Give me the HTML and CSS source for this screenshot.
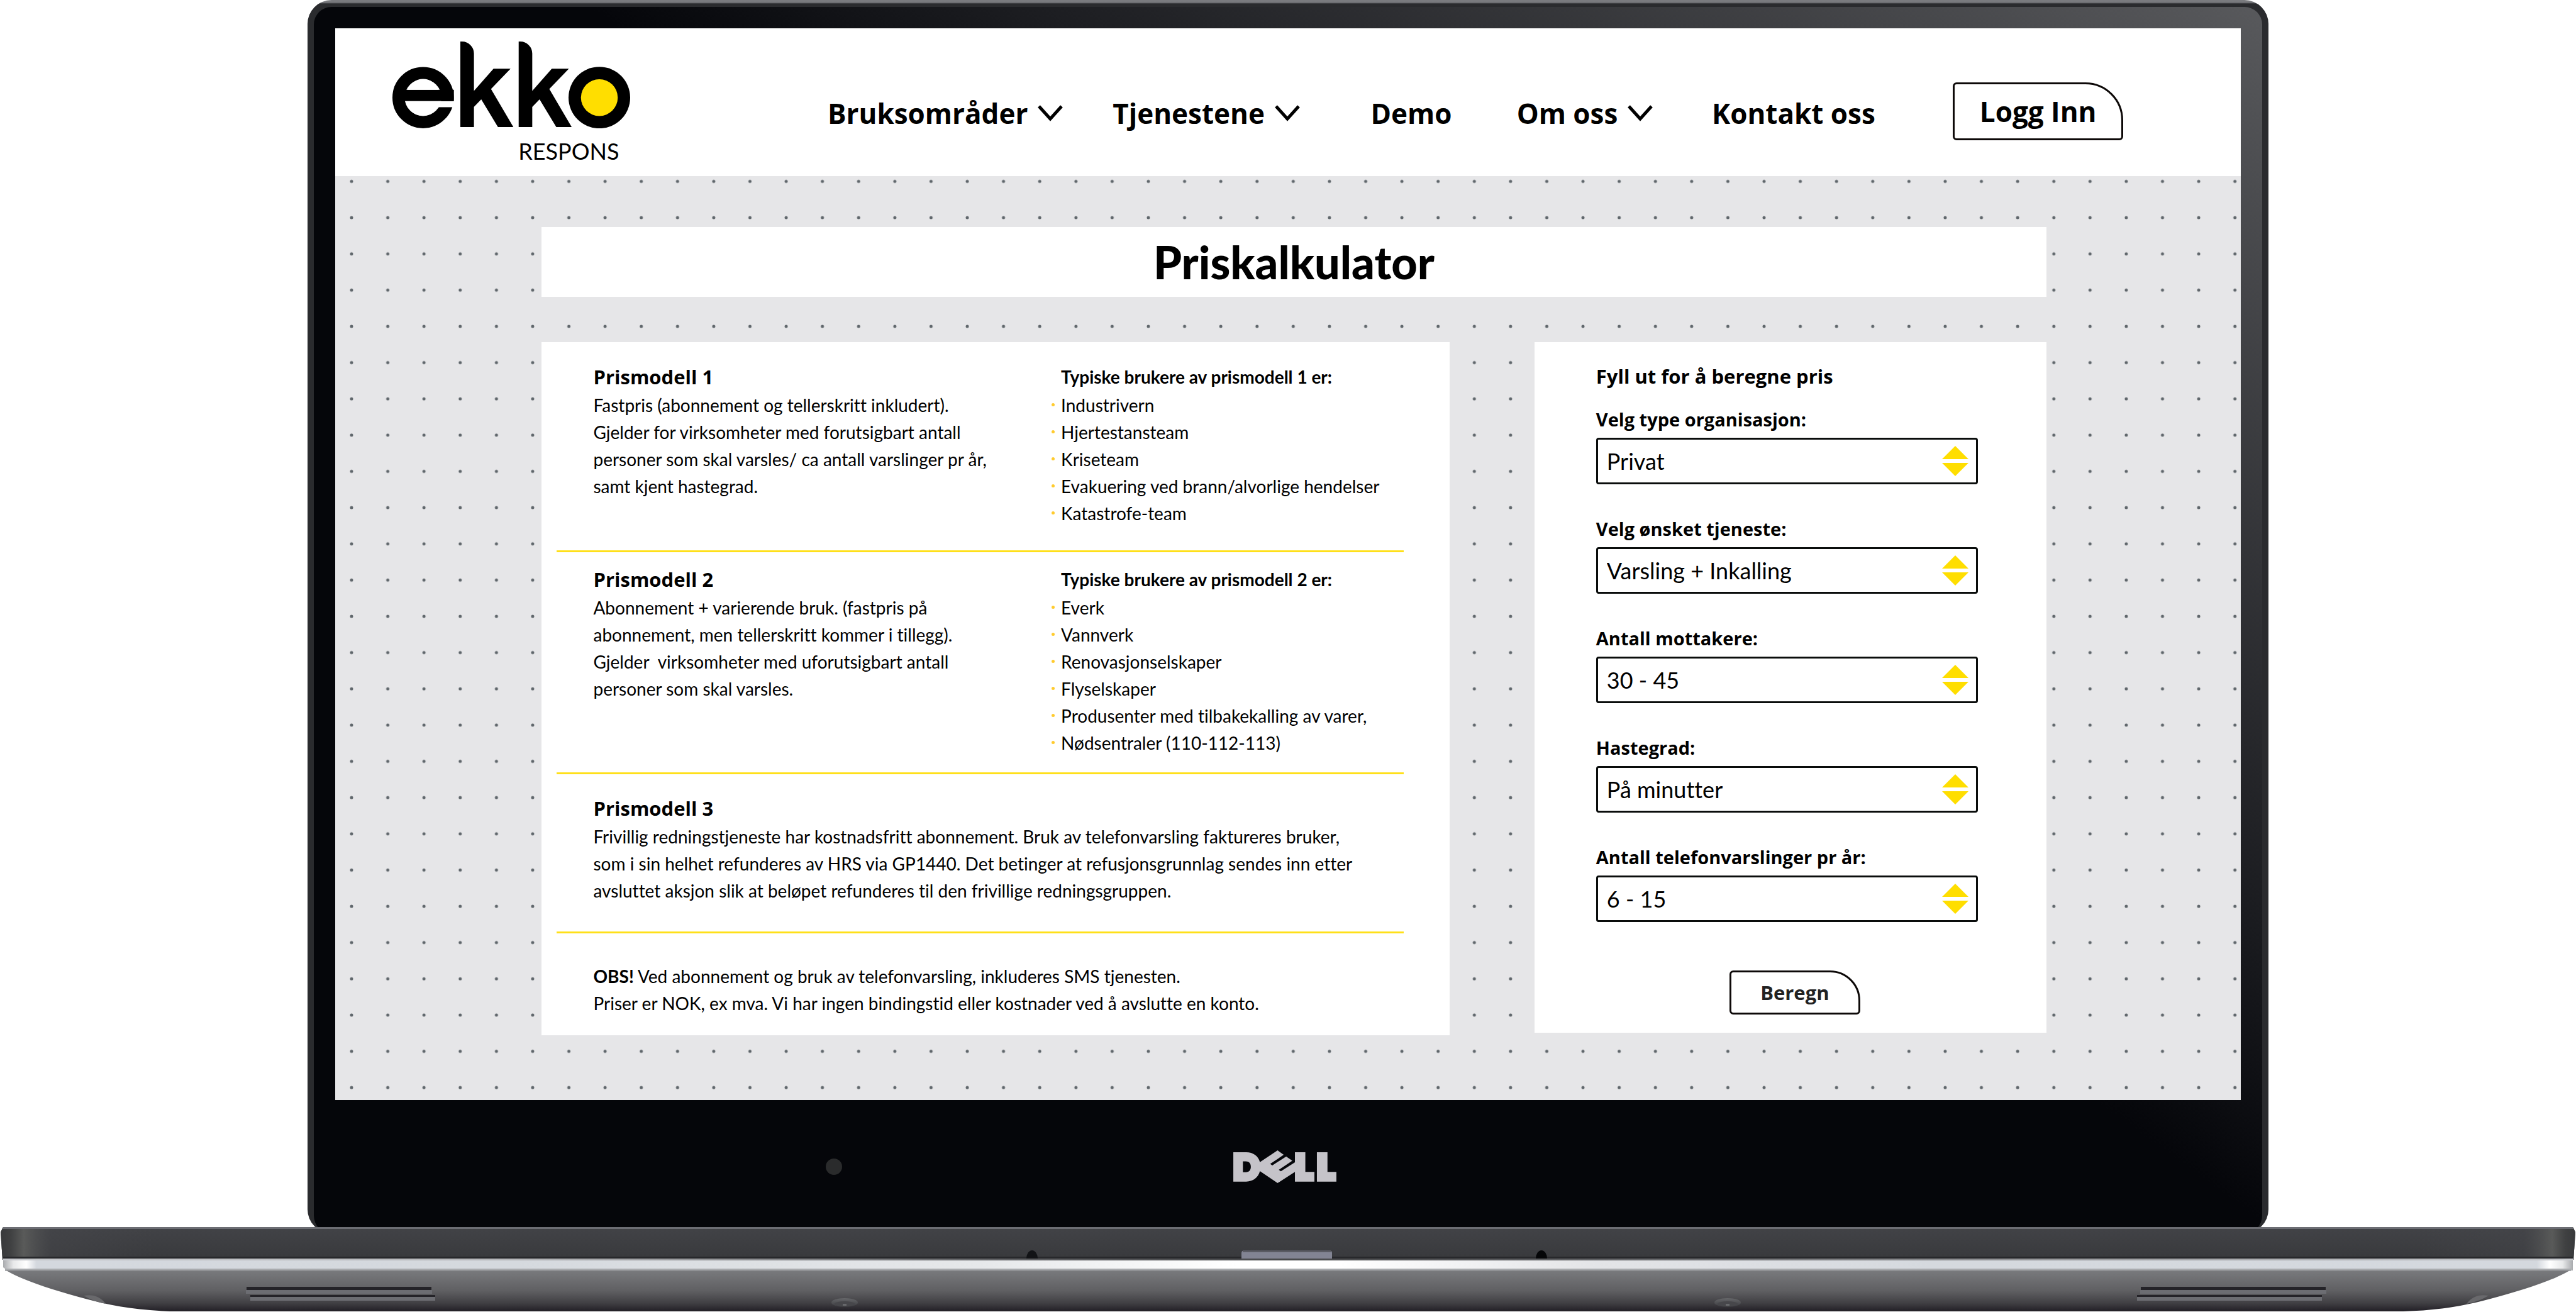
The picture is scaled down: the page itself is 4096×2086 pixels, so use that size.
FILE: index.html
```html
<!DOCTYPE html>
<html lang="no">
<head>
<meta charset="utf-8">
<meta name="viewport" content="width=device-width, initial-scale=1">
<title>Priskalkulator – Ekko Respons</title>
<link rel="stylesheet" href="styles.css">
</head>
<body>
<div class="laptop">
  <div class="lid">
    <div class="bezel">
      <div class="screen">
        <header class="site-header">
          <a class="logo" href="#" aria-label="Ekko Respons">
            <svg class="logo-mark" viewBox="68 42 1435 523" aria-hidden="true">
              <circle cx="253" cy="380" r="148" fill="none" stroke="#000" stroke-width="74"/>
              <rect x="110" y="333" width="329" height="68"/>
              <rect x="343" y="402" width="100" height="36" fill="#fff"/>
              <path d="M300 438H343C322 469 290 489 252 489C200 489 157 452 151 402H343V438Z" fill="#fff"/>
              <path d="M159 333C176 294 211 267 253 267C295 267 330 294 347 333Z" fill="#fff"/>
              <g id="stem">
                <path d="M478 42H488A72 72 0 0 1 560 114V340L678 206H781L663 328L798 558H705L604 391L560 436V558H478Z"/>
              </g>
              <use href="#stem" x="352"/>
              <circle cx="1317" cy="380" r="186"/>
              <circle cx="1317" cy="380" r="111" fill="#ffde00"/>
            </svg>
            <span class="logo-sub">RESPONS</span>
          </a>
          <nav class="nav" aria-label="Hovedmeny">
            <a href="#">Bruksområder <svg class="chevron" viewBox="0 0 40 26" aria-hidden="true"><path d="M2 2L20 22L38 2"/></svg></a>
            <a href="#">Tjenestene <svg class="chevron" viewBox="0 0 40 26" aria-hidden="true"><path d="M2 2L20 22L38 2"/></svg></a>
            <a href="#">Demo</a>
            <a href="#">Om oss <svg class="chevron" viewBox="0 0 40 26" aria-hidden="true"><path d="M2 2L20 22L38 2"/></svg></a>
            <a href="#">Kontakt oss</a>
            <button class="leaf-button login" type="button">Logg Inn</button>
          </nav>
        </header>

        <main class="content">
          <svg class="dots" aria-hidden="true">
            <defs>
              <pattern id="dot" x="-2.8" y="-20.4" width="57.59" height="57.63" patternUnits="userSpaceOnUse">
                <circle cx="28.8" cy="28.8" r="2.5" fill="#5f666b"/>
              </pattern>
            </defs>
            <rect width="100%" height="100%" fill="url(#dot)"/>
          </svg>
          <h1 class="page-title">Priskalkulator</h1>

          <div class="columns">
            <article class="card models">
              <section class="model model-first">
                <div>
                  <h2>Prismodell 1</h2>
                  <p>Fastpris (abonnement og tellerskritt inkludert).<br>Gjelder for virksomheter med forutsigbart antall<br>personer som skal varsles/ ca antall varslinger pr år,<br>samt kjent hastegrad.</p>
                </div>
                <div>
                  <h3>Typiske brukere av prismodell 1 er:</h3>
                  <ul>
                    <li>Industrivern</li>
                    <li>Hjertestansteam</li>
                    <li>Kriseteam</li>
                    <li>Evakuering ved brann/alvorlige hendelser</li>
                    <li>Katastrofe-team</li>
                  </ul>
                </div>
              </section>
              <section class="model model-second">
                <div>
                  <h2>Prismodell 2</h2>
                  <p>Abonnement + varierende bruk. (fastpris på<br>abonnement, men tellerskritt kommer i tillegg).<br>Gjelder&nbsp; virksomheter med uforutsigbart antall<br>personer som skal varsles.</p>
                </div>
                <div>
                  <h3>Typiske brukere av prismodell 2 er:</h3>
                  <ul>
                    <li>Everk</li>
                    <li>Vannverk</li>
                    <li>Renovasjonselskaper</li>
                    <li>Flyselskaper</li>
                    <li>Produsenter med tilbakekalling av varer,</li>
                    <li>Nødsentraler (110-112-113)</li>
                  </ul>
                </div>
              </section>
              <section class="model model-third">
                <div class="wide">
                  <h2>Prismodell 3</h2>
                  <p>Frivillig redningstjeneste har kostnadsfritt abonnement. Bruk av telefonvarsling faktureres bruker,<br>som i sin helhet refunderes av HRS via GP1440. Det betinger at refusjonsgrunnlag sendes inn etter<br>avsluttet aksjon slik at beløpet refunderes til den frivillige redningsgruppen.</p>
                </div>
              </section>
              <section class="notice">
                <p><strong>OBS!</strong> Ved abonnement og bruk av telefonvarsling, inkluderes SMS tjenesten.<br>Priser er NOK, ex mva. Vi har ingen bindingstid eller kostnader ved å avslutte en konto.</p>
              </section>
            </article>

            <form class="card calculator">
              <h2>Fyll ut for å beregne pris</h2>
              <div class="field">
                <label for="org">Velg type organisasjon:</label>
                <select id="org"><option>Privat</option></select>
              </div>
              <div class="field">
                <label for="service">Velg ønsket tjeneste:</label>
                <select id="service"><option>Varsling + Inkalling</option></select>
              </div>
              <div class="field">
                <label for="recipients">Antall mottakere:</label>
                <select id="recipients"><option>30 - 45</option></select>
              </div>
              <div class="field">
                <label for="urgency">Hastegrad:</label>
                <select id="urgency"><option>På minutter</option></select>
              </div>
              <div class="field">
                <label for="calls">Antall telefonvarslinger pr år:</label>
                <select id="calls"><option>6 - 15</option></select>
              </div>
              <button class="leaf-button submit" type="button">Beregn</button>
            </form>
          </div>
        </main>
      </div>
      <div class="chin">
        <span class="camera"></span>
        <svg class="dell" viewBox="54 80 624 198" role="img" aria-label="Dell">
          <g fill="#c5c3c9">
            <path fill-rule="evenodd" d="M54 91H132C174 91 206 114 215 151L322 80L359 107L277 162L290 171L374 117L411 143L329 198L342 207L427 152V91H490V210H545V269H427V210L322 278L215 206C206 244 174 269 132 269H54ZM112 147V212H130C149 212 160 200 160 180C160 160 149 147 130 147Z"/>
            <path d="M560 91H624V210H678V269H560Z"/>
          </g>
        </svg>
      </div>
    </div>
  </div>

  <svg class="base" viewBox="0 0 4096 135" preserveAspectRatio="none" aria-hidden="true">
    <defs>
      <linearGradient id="deck" x1="0" y1="0" x2="0" y2="1">
        <stop offset="0" stop-color="#424347"/><stop offset="1" stop-color="#38393c"/>
      </linearGradient>
      <linearGradient id="deck-edge">
        <stop offset="0" stop-color="#38393b"/><stop offset=".004" stop-color="#404142"/><stop offset=".009" stop-color="#595a59"/><stop offset=".02" stop-color="#45464a" stop-opacity=".5"/><stop offset=".06" stop-color="#45464a" stop-opacity="0"/>
        <stop offset=".94" stop-color="#45464a" stop-opacity="0"/><stop offset=".98" stop-color="#45464a" stop-opacity=".5"/><stop offset=".991" stop-color="#595a59"/><stop offset=".996" stop-color="#404142"/><stop offset="1" stop-color="#38393b"/>
      </linearGradient>
      <linearGradient id="lip">
        <stop offset="0" stop-color="#c6c8cc"/><stop offset=".2" stop-color="#b5b6b9"/><stop offset=".4" stop-color="#5d5e61"/><stop offset=".5" stop-color="#48494b"/><stop offset=".6" stop-color="#5d5e61"/><stop offset=".8" stop-color="#98999c"/><stop offset="1" stop-color="#c6c8cc"/>
      </linearGradient>
      <linearGradient id="strip">
        <stop offset="0" stop-color="#a9abae"/><stop offset=".004" stop-color="#e8e9ea"/><stop offset=".009" stop-color="#fff"/><stop offset=".013" stop-color="#d4d8de"/><stop offset=".2" stop-color="#d5d9de"/><stop offset=".38" stop-color="#e6e8ea"/><stop offset=".48" stop-color="#fff"/><stop offset=".52" stop-color="#fff"/><stop offset=".62" stop-color="#e3e4e7"/><stop offset=".75" stop-color="#d5d9de"/><stop offset=".986" stop-color="#d4d8de"/><stop offset=".991" stop-color="#fff"/><stop offset=".996" stop-color="#e8e9ea"/><stop offset="1" stop-color="#a9abae"/>
      </linearGradient>
      <linearGradient id="belly" x1="0" y1="0" x2="0" y2="1">
        <stop offset="0" stop-color="#797a7d"/><stop offset=".5" stop-color="#5f5f62"/><stop offset=".8" stop-color="#403f43"/><stop offset="1" stop-color="#221f26"/>
      </linearGradient>
      <linearGradient id="knob" x1="0" y1="0" x2="0" y2="1">
        <stop offset="0" stop-color="#66676a"/><stop offset="1" stop-color="#3c3c40"/>
      </linearGradient>
    </defs>
    <path d="M5 0H4091L4095 8L4092 52H4L1 8Z" fill="url(#deck)"/>
    <path d="M5 0H4091L4095 8L4092 52H4L1 8Z" fill="url(#deck-edge)"/>
    <rect x="5" width="4086" height="3" fill="#6c6d73"/>
    <rect x="4" y="47" width="4088" height="3" fill="#27282b"/>
    <path d="M1632 50A9 13 0 0 1 1650 50Z" fill="#121316"/>
    <path d="M2442 50A9 13 0 0 1 2460 50Z" fill="#050608"/>
    <path d="M1974 50V41Q1974 37 1980 37H2112Q2118 37 2118 41V50Z" fill="#828493"/>
    <rect x="1976" y="37" width="140" height="3" fill="#5a5b63"/>
    <rect x="5" y="50" width="4086" height="4" fill="url(#lip)"/>
    <path d="M5 53H4091V69H12L5 64Z" fill="url(#strip)"/>
    <rect x="8" y="66" width="4080" height="4" fill="#a9abae"/>
    <path d="M10 69H4086C4060 85 4005 102 3960 114C3920 125 3870 134 3810 134H286C226 134 176 125 136 114C91 102 36 85 10 69Z" fill="url(#belly)"/>
    <g id="vents">
      <rect x="392" y="95" width="294" height="5" fill="#242328"/>
      <rect x="391" y="100" width="296" height="6" fill="#6c6d72"/>
      <rect x="398" y="108" width="294" height="3" fill="#242328"/>
      <rect x="398" y="111" width="294" height="6" fill="#6c6d72"/>
      <ellipse cx="1343" cy="120" rx="21" ry="7" fill="url(#knob)"/>
      <ellipse cx="1343" cy="122" rx="16" ry="4" fill="#47474b"/>
      <rect x="1340" y="122" width="6" height="3" fill="#68696c"/>
      <path d="M133 109Q156 105 168 122Q150 119 133 109Z" fill="#69696c"/>
    </g>
    <use href="#vents" transform="matrix(-1 0 0 1 4090 0)"/>
  </svg>
</div>
</body>
</html>
```

FILE: styles.css
```css
* {
  box-sizing: border-box;
}

body {
  margin: 0;
  background: #fff;
  color: #000;
  font-family: Lato, "Open Sans", sans-serif;
  font-size: 28px;
  line-height: 43px;
  font-variant-ligatures: none;
}

h1,
h2,
h3,
p,
ul {
  margin: 0;
  padding: 0;
}

.laptop {
  overflow: hidden;
}

/* Lid and bezel */
.lid {
  width: 76.1%;
  margin: 0 auto;
  padding: 11px 10px 0;
  border-radius: 38px;
  background: linear-gradient(#7b7c80 0, #77787c 4px, #2a2b2e 6px);
}

.bezel {
  padding: 34px 34px 0;
  border-radius: 28px;
  background: linear-gradient(36deg, #05060a 54%, #1a1b1f 65%, #58595c 100%);
}

.screen {
  background: #fff;
}

/* Header */
.site-header {
  display: grid;
  grid-template-columns: 691fr 2245fr;
  height: 235px;
  padding: 0 0 0 91px;
}

.logo {
  width: 378px;
  padding-top: 21px;
  color: #000;
  text-decoration: none;
}

.logo-mark {
  display: block;
  width: 378px;
  height: 138px;
}

.logo-sub {
  display: block;
  padding: 16px 18px 0 0;
  font-size: 36px;
  line-height: 40px;
  text-align: right;
}

.nav {
  display: grid;
  grid-template-columns: 453fr 410fr 232fr 310fr 383fr 457fr;
  align-items: start;
  padding-top: 86px;
}

.nav a {
  display: flex;
  align-items: center;
  gap: 16px;
  padding-top: 22px;
  color: #000;
  font-family: "Open Sans", Lato, sans-serif;
  font-size: 44px;
  font-weight: 700;
  line-height: 54px;
  text-decoration: none;
  white-space: nowrap;
}

.chevron {
  width: 40px;
  height: 26px;
  fill: none;
  stroke: #000;
  stroke-width: 5;
}

.leaf-button {
  border: 3px solid #0d0908;
  background: #fff;
  font-family: "Open Sans", Lato, sans-serif;
  font-weight: 700;
  cursor: pointer;
}

.login {
  width: 271px;
  height: 92px;
  border-radius: 6px 60px 6px 6px;
  color: #000;
  font-size: 44px;
}

/* Page body */
.content {
  position: relative;
  padding: 81px 309px 103px 328px;
  background: #e6e6e8;
}

.dots {
  position: absolute;
  inset: 0;
  width: 100%;
  height: 100%;
}

.page-title,
.columns {
  position: relative;
}

.page-title {
  background: #fff;
  font-size: 72px;
  font-weight: 900;
  line-height: 111px;
  text-align: center;
}

.columns {
  display: grid;
  grid-template-columns: 1444fr 814fr;
  gap: 135px;
  align-items: start;
  margin-top: 72px;
}

.card {
  background: #fff;
}

.card h2 {
  font-family: "Open Sans", Lato, sans-serif;
  font-size: 31px;
  font-weight: 700;
}

/* Price models */
.models {
  padding: 0 73px 0 24px;
}

.models h2,
.models h3 {
  line-height: 47px;
}

.models h3 {
  font-size: 28px;
  font-weight: 700;
}

.model {
  display: grid;
  grid-template-columns: 744fr 545fr;
  padding-left: 58px;
  border-bottom: 3px solid #ffe019;
  white-space: nowrap;
}

.model-first {
  padding-top: 32px;
  padding-bottom: 37px;
}

.model-second {
  padding-top: 20px;
  padding-bottom: 25px;
}

.model-third {
  padding-top: 31px;
  padding-bottom: 43px;
}

.wide {
  grid-column: 1 / -1;
}

.model ul {
  list-style: none;
}

.model li::before {
  content: "";
  float: left;
  width: 5px;
  height: 5px;
  margin: 18px 0 0 -15px;
  border-radius: 50%;
  background: #ffcb2e;
}

.notice {
  padding: 47px 0 29px 58px;
  white-space: nowrap;
}

/* Calculator form */
.calculator {
  display: flex;
  flex-direction: column;
  gap: 50px;
  padding: 32px 109px 29px 98px;
}

.calculator h2 {
  margin-bottom: -24px;
  line-height: 44px;
}

.field {
  display: flex;
  flex-direction: column;
  gap: 8px;
}

.field label {
  font-family: "Open Sans", Lato, sans-serif;
  font-size: 29px;
  font-weight: 700;
  line-height: 42px;
}

.field select {
  appearance: none;
  height: 74px;
  padding: 0 14px;
  border: 3px solid #0a0d0c;
  border-radius: 4px;
  background: #fff url("data:image/svg+xml,%3Csvg xmlns='http://www.w3.org/2000/svg' width='42' height='48'%3E%3Cpath d='M21 0L42 21H0ZM0 27H42L21 48Z' fill='%23ffde00'/%3E%3C/svg%3E") no-repeat right 12px center;
  color: #000;
  font-family: inherit;
  font-size: 36px;
  font-variant-ligatures: none;
}

.submit {
  width: 208px;
  height: 70px;
  margin: 27px 0 0 212px;
  border-radius: 6px 48px 6px 6px;
  color: #222;
  font-size: 31px;
}

/* Below the screen */
.chin {
  display: flex;
  align-items: center;
  height: 212px;
  padding-left: 780px;
}

.camera {
  width: 26px;
  height: 26px;
  border-radius: 50%;
  background: #2a2b2c;
}

.dell {
  width: 164px;
  height: 52px;
  margin-left: 622px;
}

.base {
  position: relative;
  display: block;
  width: 100%;
  height: 135px;
  margin-top: -10px;
}
```
